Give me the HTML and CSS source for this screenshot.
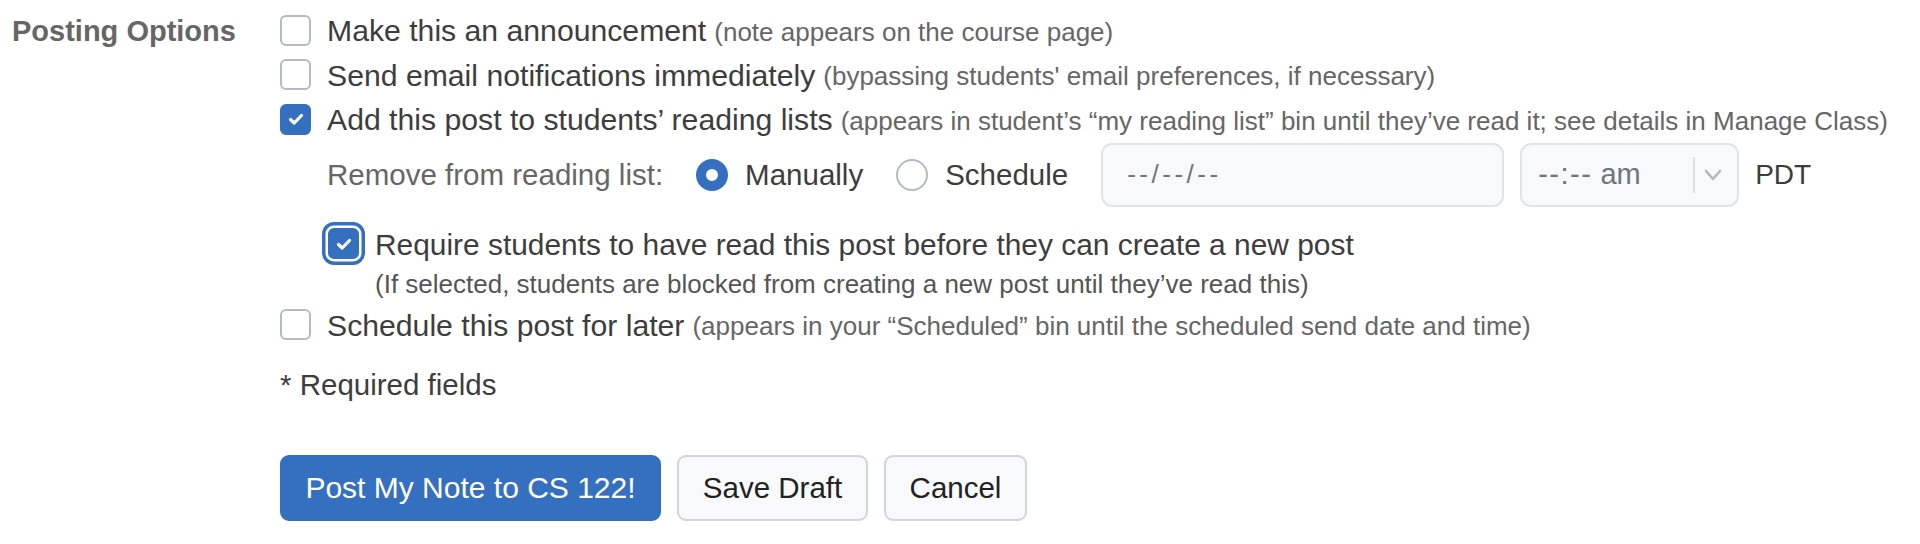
FILE: index.html
```html
<!DOCTYPE html>
<html>
<head>
<meta charset="utf-8">
<link rel="stylesheet" href="styles.css">
</head>
<body>
<div class="form">
  <div class="label">Posting Options</div>
  <div class="options">
    <div class="row">
      <span class="cb"></span>
      <span class="main">Make this an announcement</span>
      <span class="note">(note appears on the course page)</span>
    </div>
    <div class="row">
      <span class="cb"></span>
      <span class="main">Send email notifications immediately</span>
      <span class="note">(bypassing students' email preferences, if necessary)</span>
    </div>
    <div class="row">
      <span class="cb checked"><svg viewBox="0 0 30 30" width="30" height="30"><path d="M9.5 15.5 L13.2 19 L20.5 11.5" fill="none" stroke="#fff" stroke-width="3.2" stroke-linecap="round" stroke-linejoin="round"/></svg></span>
      <span class="main">Add this post to students’ reading lists</span>
      <span class="note">(appears in student’s “my reading list” bin until they’ve read it; see details in Manage Class)</span>
    </div>
    <div class="sub">
      <div class="remove-row">
        <span class="remove-label">Remove from reading list:</span>
        <span class="radio on"></span>
        <span class="radio-text">Manually</span>
        <span class="radio"></span>
        <span class="radio-text">Schedule</span>
        <div class="date-box">--/--/--</div>
        <div class="time-box">
          <span class="time-text"><span class="dashes">--:--</span> am</span>
          <span class="divider"></span>
          <svg class="chev" viewBox="0 0 20 14" width="20" height="14"><path d="M3 3 L10 11 L17 3" fill="none" stroke="#b8b8b8" stroke-width="2.6" stroke-linecap="round" stroke-linejoin="round"/></svg>
        </div>
        <span class="tz">PDT</span>
      </div>
      <div class="row req-row">
        <span class="cb checked focus"><svg viewBox="0 0 30 30" width="30" height="30"><path d="M9.5 15.5 L13.2 19 L20.5 11.5" fill="none" stroke="#fff" stroke-width="3.2" stroke-linecap="round" stroke-linejoin="round"/></svg></span>
        <span class="main req-main">Require students to have read this post before they can create a new post</span>
      </div>
      <div class="req-note">(If selected, students are blocked from creating a new post until they’ve read this)</div>
    </div>
    <div class="row">
      <span class="cb"></span>
      <span class="main">Schedule this post for later</span>
      <span class="note">(appears in your “Scheduled” bin until the scheduled send date and time)</span>
    </div>
    <div class="required">* Required fields</div>
    <div class="buttons">
      <button class="btn primary">Post My Note to CS 122!</button>
      <button class="btn draft">Save Draft</button>
      <button class="btn cancel">Cancel</button>
    </div>
  </div>
</div>
</body>
</html>
```

FILE: styles.css
```css
html, body {
  margin: 0;
  padding: 0;
  background: #ffffff;
}
body {
  font-family: "Liberation Sans", Arial, Helvetica, sans-serif;
  color: #3d3d3d;
  width: 1920px;
  height: 544px;
  overflow: hidden;
}
.form {
  display: flex;
  align-items: flex-start;
}
.label {
  width: 268px;
  padding-left: 12px;
  padding-top: 13px;
  font-size: 29px;
  font-weight: bold;
  color: #666666;
  line-height: 36px;
  white-space: nowrap;
}
.options {
  padding-top: 8px;
  display: flex;
  flex-direction: column;
}
.row {
  display: flex;
  align-items: center;
  height: 44.5px;
  white-space: nowrap;
}
.cb {
  box-sizing: border-box;
  width: 31px;
  height: 31px;
  border: 2px solid #b5bac2;
  border-radius: 6px;
  background: #fff;
  flex: none;
  margin-right: 16px;
  display: flex;
  align-items: center;
  justify-content: center;
}
.cb.checked {
  background: #3570c0;
  border-color: #3570c0;
}
.cb svg {
  display: block;
  flex: none;
}
.cb.focus {
  box-shadow: 0 0 0 2.5px #ffffff, 0 0 0 6px #3570c0;
}
.main {
  font-size: 30.2px;
  color: #3d3d3d;
  position: relative;
  top: 1px;
}
.req-main {
  font-size: 29.9px;
}
.note {
  font-size: 26px;
  color: #666666;
  margin-left: 8px;
  position: relative;
  top: 2px;
}
.sub {
  padding-left: 47px;
  display: flex;
  flex-direction: column;
}
.remove-row {
  display: flex;
  align-items: center;
  height: 66px;
  margin-top: 0;
  white-space: nowrap;
}
.remove-label {
  font-size: 29.5px;
  color: #666666;
  margin-right: 33px;
}
.radio {
  box-sizing: border-box;
  width: 32px;
  height: 32px;
  border-radius: 50%;
  border: 2px solid #b5bac2;
  background: #fff;
  flex: none;
  margin-right: 17px;
}
.radio.on {
  border: 10.5px solid #3570c0;
}
.radio-text {
  font-size: 29.5px;
  color: #3d3d3d;
  margin-right: 33px;
}
.date-box {
  box-sizing: border-box;
  width: 403px;
  height: 64px;
  border: 2px solid #e0e3e7;
  border-radius: 11px;
  background: #f8f9fa;
  font-size: 26px;
  letter-spacing: 3.5px;
  color: #6c757d;
  padding-left: 24px;
  display: flex;
  align-items: center;
  margin-left: 0;
  margin-right: 16px;
}
.time-box {
  box-sizing: border-box;
  width: 219px;
  height: 64px;
  border: 2px solid #e0e3e7;
  border-radius: 11px;
  background: #f8f9fa;
  display: flex;
  align-items: center;
  padding-left: 16px;
  margin-right: 16px;
}
.time-text {
  font-size: 29px;
  color: #6c757d;
  width: 155px;
  flex: none;
}
.dashes {
  letter-spacing: 1.5px;
}
.divider {
  width: 1.5px;
  height: 36px;
  background: #dcdfe3;
  margin-right: 8px;
  flex: none;
}
.chev {
  display: block;
}
.tz {
  font-size: 28px;
  color: #3d3d3d;
}
.req-row {
  height: 44px;
  margin-top: 14px;
}
.req-row .cb {
  margin-left: 1px;
}
.req-note {
  font-size: 26px;
  color: #555;
  padding-left: 48px;
  height: 37px;
  line-height: 37px;
  white-space: nowrap;
}
.required {
  font-size: 29.5px;
  color: #3d3d3d;
  margin-top: 18px;
  line-height: 40px;
}
.buttons {
  display: flex;
  gap: 16px;
  margin-top: 50px;
}
.btn {
  box-sizing: border-box;
  height: 66px;
  padding: 0;
  font-family: "Liberation Sans", Arial, Helvetica, sans-serif;
  font-size: 29.5px;
  color: #222;
  background: #f8f9fa;
  border: 2px solid #d1d5da;
  border-radius: 9px;
  margin: 0;
}
.btn.primary {
  background: #3570c0;
  border-color: #3570c0;
  color: #ffffff;
  width: 381px;
  font-size: 30px;
}
.btn.draft {
  width: 191px;
}
.btn.cancel {
  width: 143px;
}
```
